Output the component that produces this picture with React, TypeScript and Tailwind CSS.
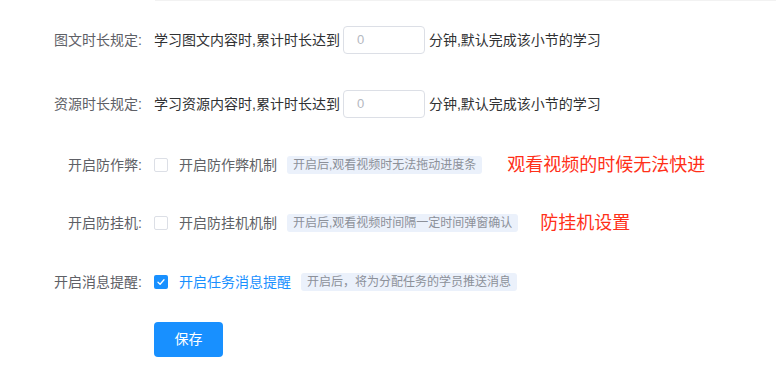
import * as React from "react";

const font = { fontFamily: '"Liberation Sans", "Noto Sans CJK SC", sans-serif' };

function Label({ children }: { children: React.ReactNode }) {
  return (
    <div className="w-[142px] shrink-0 pr-0 text-right text-[14px] text-[#5e6066]">{children}</div>
  );
}

function Checkbox({ checked }: { checked?: boolean }) {
  return checked ? (
    <span className="flex h-[14px] w-[14px] items-center justify-center rounded-[2px] bg-[#1890ff]">
      <svg width="10" height="10" viewBox="0 0 10 10" fill="none">
        <path d="M2 5.2L4.1 7.2L8 2.8" stroke="white" strokeWidth="1.3" strokeLinecap="round" strokeLinejoin="round" />
      </svg>
    </span>
  ) : (
    <span className="h-[14px] w-[14px] rounded-[2px] border border-[#dcdfe6] bg-white" />
  );
}

function Tag({ children }: { children: React.ReactNode }) {
  return (
    <span className="ml-[10px] flex h-[18px] items-center rounded-[3px] bg-[#ebf1fb] px-[6px] text-[12px] text-[#8c9099]">
      {children}
    </span>
  );
}

function DurationRow({ label, lead }: { label: string; lead: string }) {
  return (
    <div className="flex h-[28px] items-center">
      <Label>{label}</Label>
      <div className="ml-[12px] flex items-center text-[14px] text-[#303133]">
        <span>{lead}</span>
        <div className="ml-[3px] mr-[4px] flex h-[28px] w-[82px] items-center rounded-[4px] border border-[#dcdfe6] pl-[13px] text-[13px] text-[#b4b8bf]">
          0
        </div>
        <span>分钟,默认完成该小节的学习</span>
      </div>
    </div>
  );
}

function SwitchRow({
  label,
  text,
  tip,
  checked,
  note,
  noteGap,
}: {
  label: string;
  text: string;
  tip: string;
  checked?: boolean;
  note?: string;
  noteGap?: string;
}) {
  return (
    <div className="flex h-[28px] items-center">
      <Label>{label}</Label>
      <div className="ml-[12px] flex items-center">
        <Checkbox checked={checked} />
        <span className={`ml-[11px] text-[14px] ${checked ? "text-[#1890ff]" : "text-[#606266]"}`}>{text}</span>
        <Tag>{tip}</Tag>
        {note && <span className={`${noteGap} text-[18px] text-[#ff3019]`}>{note}</span>}
      </div>
    </div>
  );
}

export default function App() {
  return (
    <div className="h-[390px] w-[776px] bg-white" style={font}>
      <div className="ml-[155px] h-px bg-[#f2f2f2]" />
      <div className="mt-[25px]">
        <DurationRow label="图文时长规定:" lead="学习图文内容时,累计时长达到" />
      </div>
      <div className="mt-[36px]">
        <DurationRow label="资源时长规定:" lead="学习资源内容时,累计时长达到" />
      </div>
      <div className="mt-[33px]">
        <SwitchRow
          label="开启防作弊:"
          text="开启防作弊机制"
          tip="开启后,观看视频时无法拖动进度条"
          note="观看视频的时候无法快进"
          noteGap="ml-[25px]"
        />
      </div>
      <div className="mt-[30px]">
        <SwitchRow
          label="开启防挂机:"
          text="开启防挂机机制"
          tip="开启后,观看视频时间隔一定时间弹窗确认"
          note="防挂机设置"
          noteGap="ml-[22px]"
        />
      </div>
      <div className="mt-[31px]">
        <SwitchRow
          label="开启消息提醒:"
          text="开启任务消息提醒"
          tip="开启后，将为分配任务的学员推送消息"
          checked
        />
      </div>
      <div className="ml-[154px] mt-[26px]">
        <button className="flex h-[35px] w-[69px] items-center justify-center rounded-[4px] bg-[#1890ff] text-[14px] text-white">
          保存
        </button>
      </div>
    </div>
  );
}
